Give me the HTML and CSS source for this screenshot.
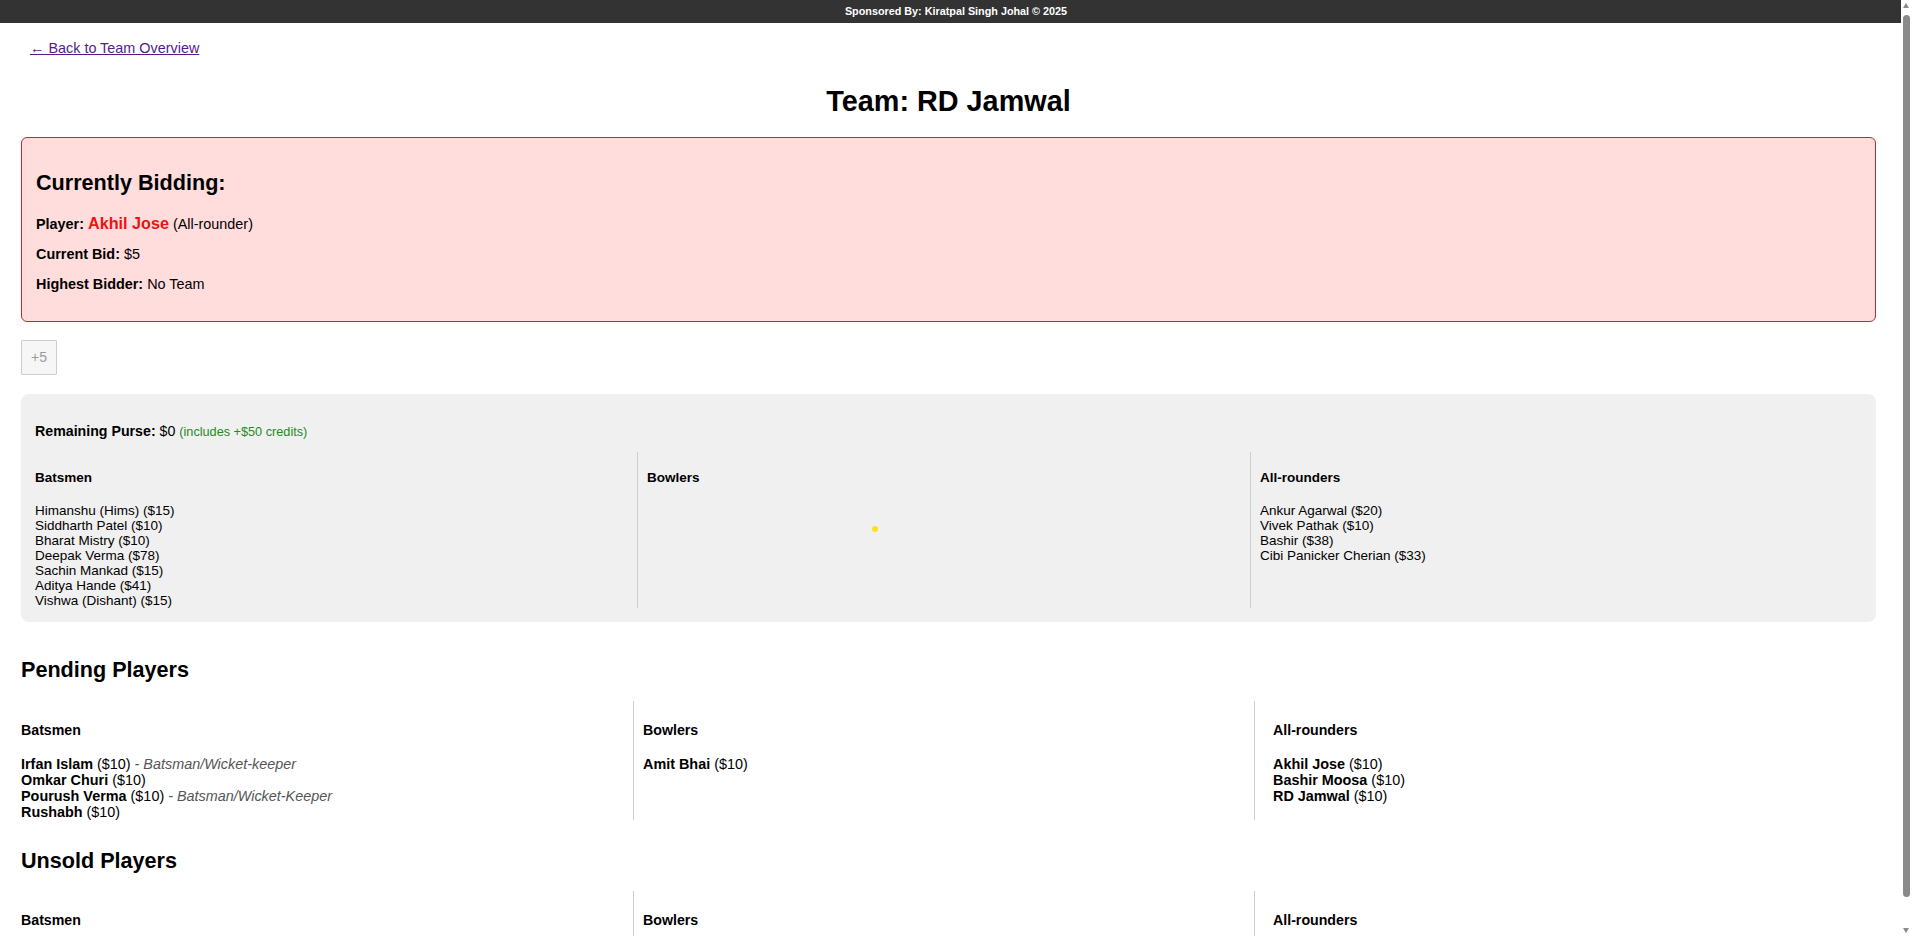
FILE: index.html
```html
<!DOCTYPE html>
<html lang="en">
<head>
<meta charset="utf-8">
<title>Team: RD Jamwal</title>
<link rel="stylesheet" href="styles.css">
</head>
<body>
<div class="topbar">Sponsored By: Kiratpal Singh Johal © 2025</div>
<div class="page">
  <div class="back"><a href="#">← Back to Team Overview</a></div>
  <h1 class="team-title">Team: RD Jamwal</h1>

  <div class="bidding">
    <h2 class="bidding-title">Currently Bidding:</h2>
    <p class="bid-line bid-player"><b>Player:</b> <span class="bid-name">Akhil Jose</span> (All-rounder)</p>
    <p class="bid-line"><b>Current Bid:</b> $5</p>
    <p class="bid-line bid-last"><b>Highest Bidder:</b> No Team</p>
  </div>

  <div class="bid-actions"><button class="bid-btn" disabled>+5</button></div>

  <div class="purse-panel">
    <p class="purse"><b>Remaining Purse:</b> $0 <span class="credits">(includes +$50 credits)</span></p>
    <div class="squad-cols">
      <div class="squad-col">
        <h4 class="col-title">Batsmen</h4>
        <ul class="squad-list">
          <li>Himanshu (Hims) ($15)</li>
          <li>Siddharth Patel ($10)</li>
          <li>Bharat Mistry ($10)</li>
          <li>Deepak Verma ($78)</li>
          <li>Sachin Mankad ($15)</li>
          <li>Aditya Hande ($41)</li>
          <li>Vishwa (Dishant) ($15)</li>
        </ul>
      </div>
      <div class="squad-col squad-col-sep">
        <h4 class="col-title">Bowlers</h4>
        <ul class="squad-list"></ul>
        <span class="cursor-dot"></span>
      </div>
      <div class="squad-col squad-col-sep">
        <h4 class="col-title">All-rounders</h4>
        <ul class="squad-list">
          <li>Ankur Agarwal ($20)</li>
          <li>Vivek Pathak ($10)</li>
          <li>Bashir ($38)</li>
          <li>Cibi Panicker Cherian ($33)</li>
        </ul>
      </div>
    </div>
  </div>

  <h2 class="section-title section-pending">Pending Players</h2>
  <div class="pool-cols">
    <div class="pool-col">
      <h4 class="pool-title">Batsmen</h4>
      <ul class="pool-list">
        <li><b>Irfan Islam</b> ($10) <span class="role">- Batsman/Wicket-keeper</span></li>
        <li><b>Omkar Churi</b> ($10)</li>
        <li><b>Pourush Verma</b> ($10) <span class="role">- Batsman/Wicket-Keeper</span></li>
        <li><b>Rushabh</b> ($10)</li>
      </ul>
    </div>
    <div class="pool-col pool-col-mid">
      <h4 class="pool-title">Bowlers</h4>
      <ul class="pool-list">
        <li><b>Amit Bhai</b> ($10)</li>
      </ul>
    </div>
    <div class="pool-col pool-col-last">
      <h4 class="pool-title">All-rounders</h4>
      <ul class="pool-list">
        <li><b>Akhil Jose</b> ($10)</li>
        <li><b>Bashir Moosa</b> ($10)</li>
        <li><b>RD Jamwal</b> ($10)</li>
      </ul>
    </div>
  </div>

  <h2 class="section-title section-unsold">Unsold Players</h2>
  <div class="pool-cols unsold-cols">
    <div class="pool-col">
      <h4 class="pool-title">Batsmen</h4>
    </div>
    <div class="pool-col pool-col-mid">
      <h4 class="pool-title">Bowlers</h4>
    </div>
    <div class="pool-col pool-col-last">
      <h4 class="pool-title">All-rounders</h4>
    </div>
  </div>
</div>

<div class="scrollbar" aria-hidden="true">
  <span class="sb-arrow sb-up"></span>
  <span class="sb-thumb"></span>
  <span class="sb-arrow sb-down"></span>
</div>
</body>
</html>
```

FILE: styles.css
```css
html, body {
  margin: 0;
  padding: 0;
  background: #ffffff;
}

body {
  font-family: "Liberation Sans", Arial, sans-serif;
  font-size: 14.4px;
  color: #000;
}

.topbar {
  height: 23px;
  line-height: 23px;
  background: #333333;
  color: #ffffff;
  font-size: 10.8px;
  font-weight: bold;
  text-align: center;
}

.page {
  display: flex;
  flex-direction: column;
  padding: 0 36px 80px 21px;
}

.back {
  margin: 17px 0 0 9px;
  line-height: 16px;
}

.back a {
  color: #551a8b;
  text-decoration: underline;
}

.team-title {
  margin: 29px 0 0;
  font-size: 28.8px;
  line-height: 32px;
  font-weight: bold;
  text-align: center;
}

/* Currently bidding box */
.bidding {
  margin-top: 20px;
  display: flex;
  flex-direction: column;
  background: #ffdddd;
  border: 1px solid #c62828;
  border-radius: 6px;
  padding: 15px 15px 15px 14px;
}

.bidding-title {
  margin: 18px 0 0;
  font-size: 21.6px;
  line-height: 24px;
  font-weight: bold;
}

.bid-line {
  margin: 13px 0 0;
  line-height: 17px;
}

.bid-player {
  margin-top: 19px;
  line-height: 18px;
}

.bid-last {
  margin-bottom: 12.5px;
}

.bid-name {
  color: #ee1111;
  font-weight: bold;
  font-size: 16.2px;
}

/* +5 button */
.bid-actions {
  margin-top: 18.5px;
  display: flex;
}

.bid-btn {
  font-family: "Liberation Sans", Arial, sans-serif;
  font-size: 14px;
  line-height: 17px;
  padding: 8px 9px;
  background: #f6f6f6;
  border: 1px solid #cdcdcd;
  border-radius: 1px;
  color: #9a9a9a;
}

/* Purse / squad panel */
.purse-panel {
  margin-top: 18.5px;
  background: #f0f0f0;
  border-radius: 8px;
  padding: 12px 14px 14.5px;
  display: flow-root;
}

.purse {
  margin: 17.5px 0 11.5px;
  line-height: 16px;
  font-size: 14.2px;
}

.credits {
  color: #1f8a1f;
  font-size: 12.7px;
}

.squad-cols {
  display: grid;
  grid-template-columns: 602fr 613fr 612fr;
}

.squad-col {
  position: relative;
  font-size: 13.5px;
}

.squad-col-sep {
  border-left: 1px solid #cfcfcf;
  padding-left: 9px;
}

.col-title {
  margin: 18px 0 17px;
  font-size: 13.5px;
  line-height: 16px;
  font-weight: bold;
}

.squad-list {
  list-style: none;
  margin: 0;
  padding: 0;
  line-height: 15px;
}

.cursor-dot {
  position: absolute;
  left: 234px;
  top: 74px;
  width: 6px;
  height: 6px;
  border-radius: 50%;
  background: #ffe01a;
}

/* Pending / unsold sections */
.section-title {
  font-size: 21.6px;
  line-height: 25px;
  font-weight: bold;
  margin: 0;
}

.section-pending {
  margin-top: 35px;
}

.section-unsold {
  margin-top: 28px;
}

.pool-cols {
  margin-top: 18.5px;
  display: grid;
  grid-template-columns: 612fr 621fr 622fr;
}

.unsold-cols {
  margin-top: 17.5px;
}

.pool-col-mid {
  border-left: 1px solid #cfcfcf;
  padding-left: 9px;
}

.pool-col-last {
  border-left: 1px solid #cfcfcf;
  padding-left: 18px;
}

.pool-title {
  margin: 21px 0 18.5px;
  font-size: 14.2px;
  line-height: 16px;
  font-weight: bold;
}

.pool-list {
  list-style: none;
  margin: 0;
  padding: 0;
  line-height: 16px;
}

.role {
  color: #555555;
  font-style: italic;
}

/* Browser scrollbar look */
.scrollbar {
  position: fixed;
  top: 0;
  right: 0;
  width: 11px;
  height: 100vh;
  background: #ffffff;
}

.sb-thumb {
  position: absolute;
  left: 2px;
  width: 7px;
  top: 15px;
  bottom: 39px;
  border-radius: 4px;
  background: #8a8a8a;
}

.sb-arrow {
  position: absolute;
  left: 2px;
  width: 0;
  height: 0;
  border-left: 3.5px solid transparent;
  border-right: 3.5px solid transparent;
}

.sb-up {
  top: 3px;
  border-bottom: 5px solid #8a8a8a;
}

.sb-down {
  bottom: 3px;
  border-top: 5px solid #8a8a8a;
}
```
